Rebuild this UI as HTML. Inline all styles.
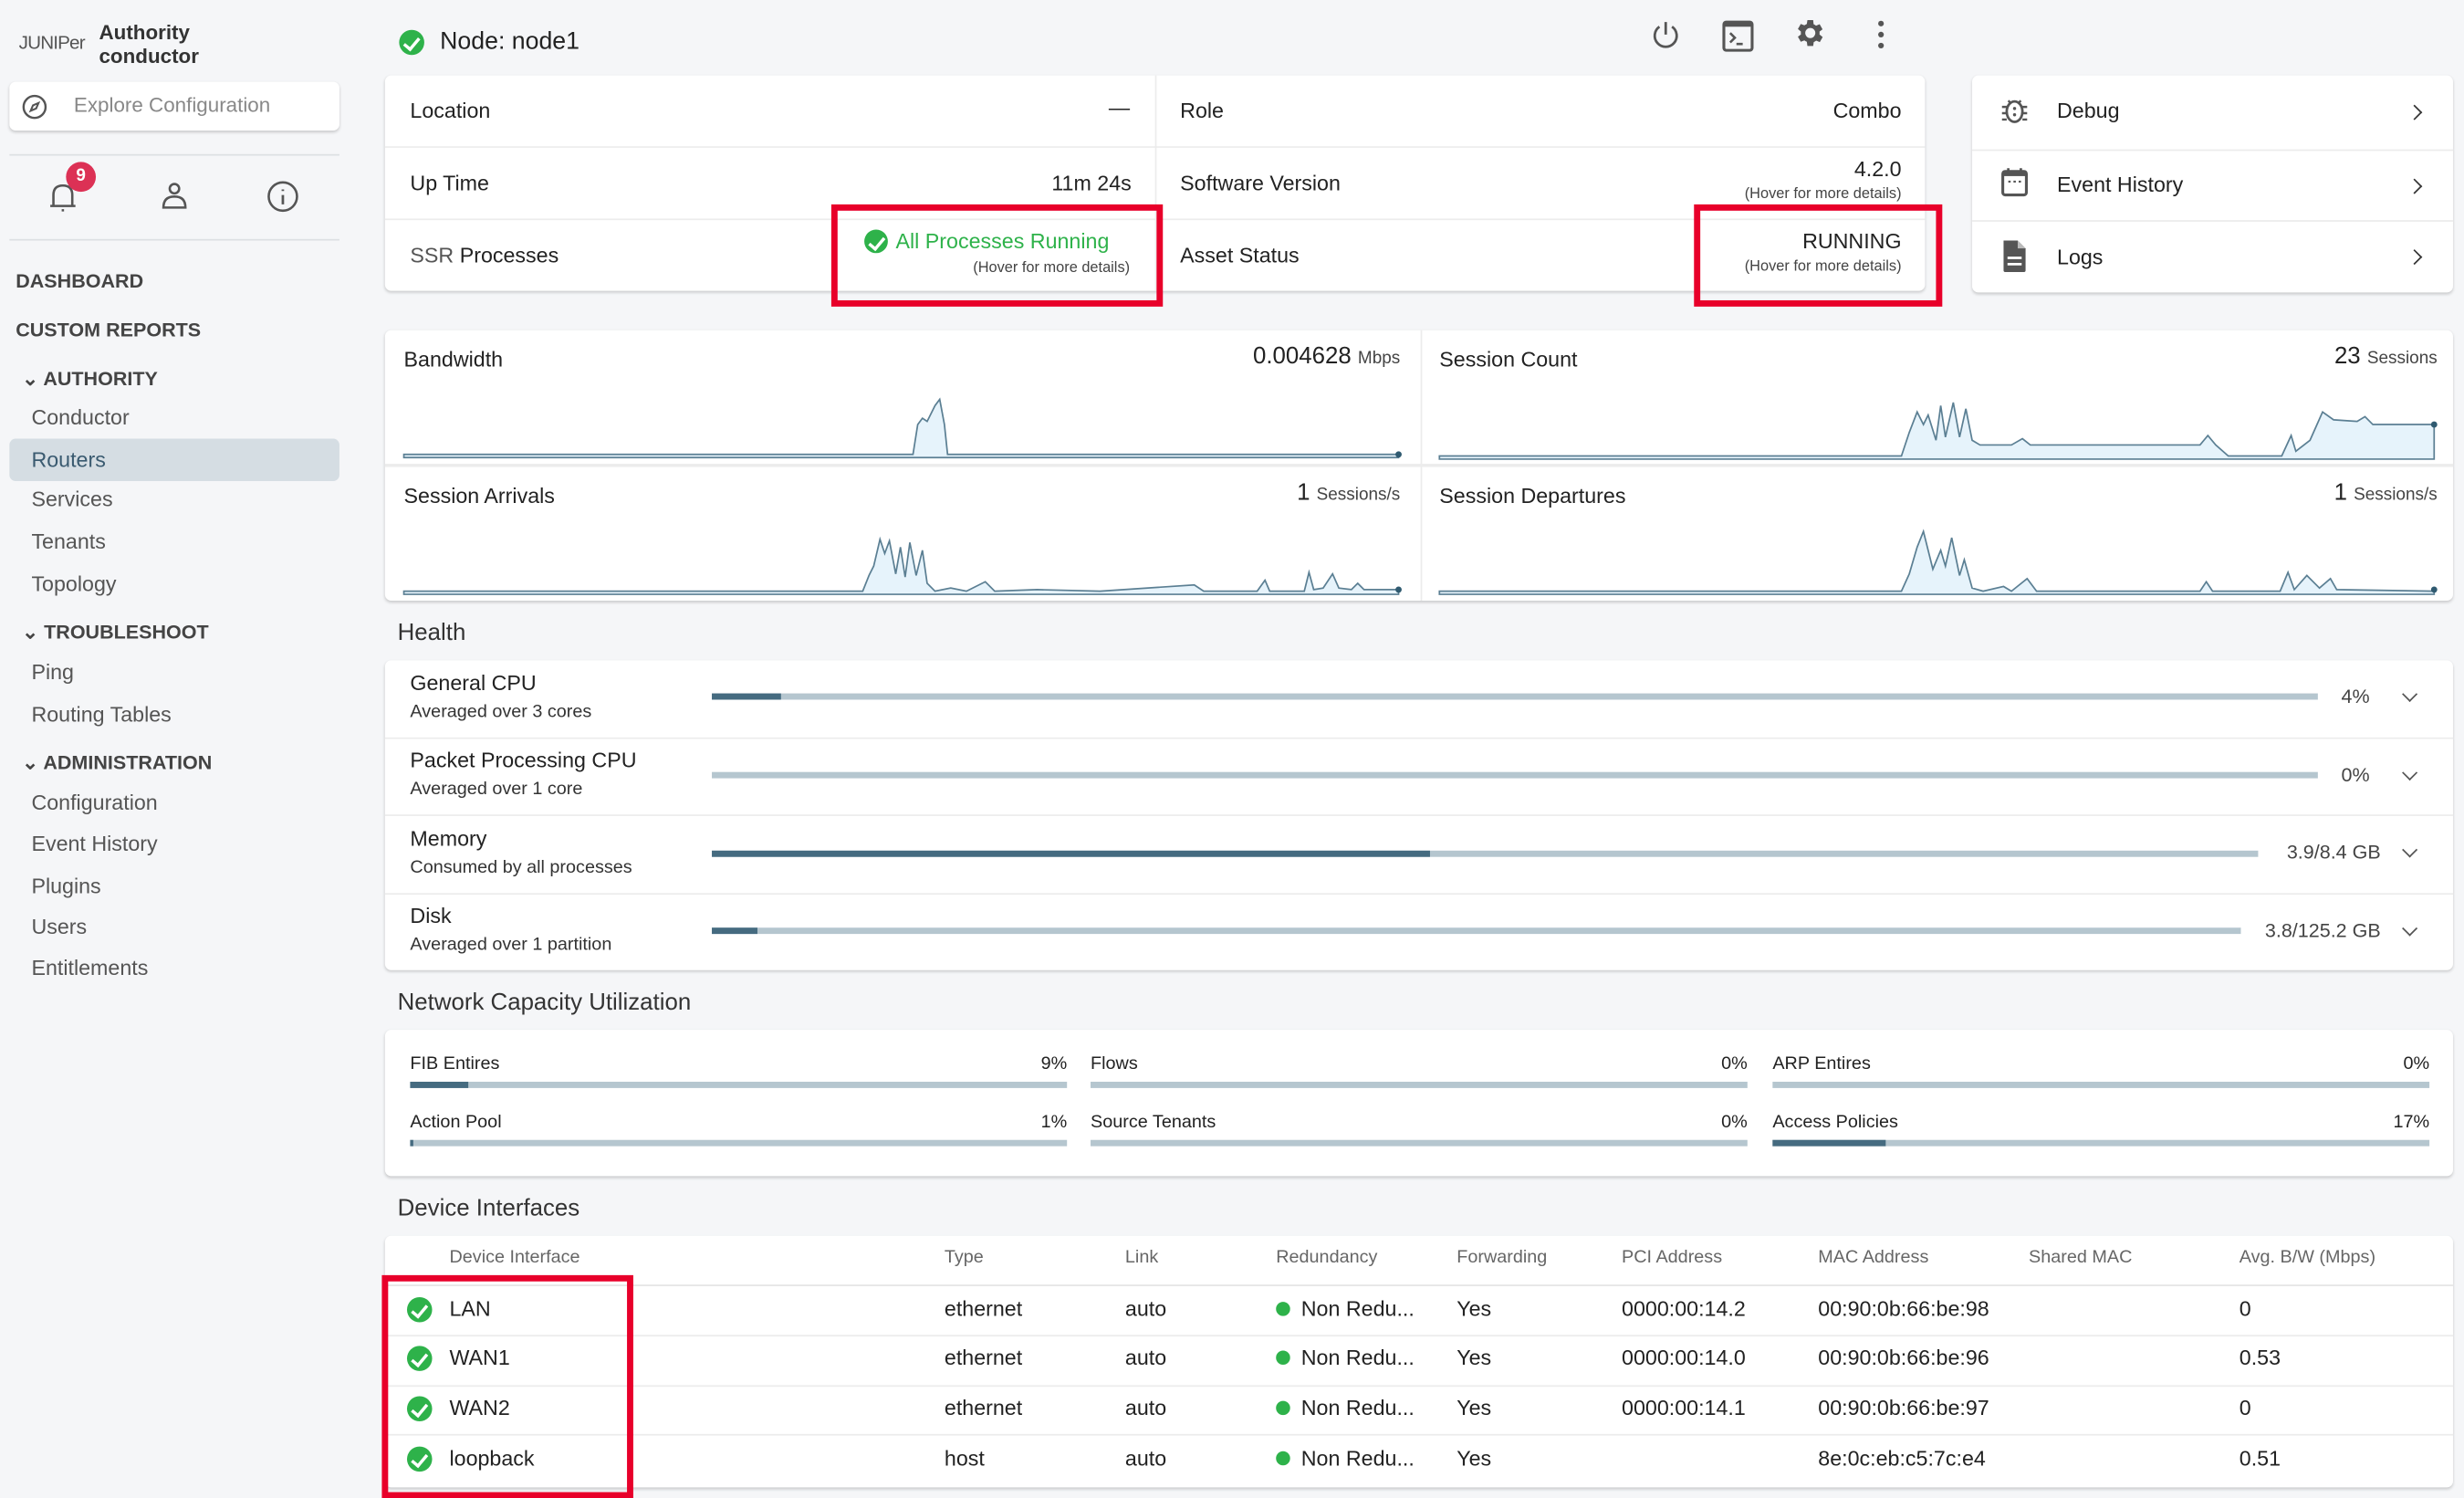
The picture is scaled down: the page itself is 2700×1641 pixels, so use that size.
<!DOCTYPE html>
<html><head><meta charset="utf-8"><style>
html,body{margin:0;padding:0;background:#f5f6f8;overflow:hidden}
#w{position:absolute;left:0;top:0;width:1568px;height:951px;transform:scale(1.72194,1.7224);transform-origin:0 0;font-family:"Liberation Sans",sans-serif;color:#222}
.a{position:absolute;white-space:nowrap;line-height:1}
.card{position:absolute;background:#fff;border-radius:4px;box-shadow:0 1px 2px rgba(0,0,0,.18)}
.hl{position:absolute;height:1px;background:#ececec}
.vl{position:absolute;width:1px;background:#ececec}
.nav{font-size:13.5px;color:#555}
.sec{font-size:12.5px;font-weight:bold;color:#444}
.lbl{font-size:13.5px;color:#222}
.bar{position:absolute;height:4px;background:#b5c6cf}
.bar i{position:absolute;left:0;top:0;height:100%;background:#456b80}
.red{position:absolute;border:4px solid #e8002a;box-sizing:border-box}
.th{font-size:11.5px;color:#666}
.td{font-size:13.5px;color:#222}
.chk{position:absolute;width:16px;height:16px;border-radius:50%;background:#2eb24a}
.chk:after{content:"";position:absolute;left:5px;top:2.5px;width:4px;height:8px;border:solid #fff;border-width:0 2px 2px 0;transform:rotate(40deg)}
.dot{position:absolute;width:9px;height:9px;border-radius:50%;background:#2eb24a}
.chev{position:absolute;width:6px;height:6px;border:solid #555;border-width:0 1.5px 1.5px 0;transform:rotate(45deg)}
.rchev{position:absolute;width:6px;height:6px;border:solid #333;border-width:1.5px 1.5px 0 0;transform:rotate(45deg)}
</style></head><body><div id="w">

<!-- Sidebar -->
<div class="a" style="left:12px;top:21px;font-size:12px;color:#555;letter-spacing:-0.5px">JUNIPer</div>
<div class="a" style="left:63px;top:14px;font-size:13px;font-weight:bold;color:#333">Authority</div>
<div class="a" style="left:63px;top:29px;font-size:13px;font-weight:bold;color:#333">conductor</div>
<div class="card" style="left:6px;top:52px;width:210px;height:31px"></div>
<svg style="position:absolute;left:13px;top:59px" width="18" height="18" viewBox="0 0 18 18"><circle cx="9" cy="9" r="7" fill="none" stroke="#555" stroke-width="1.4"/><path d="M11.5 6.5 L8 8 L6.5 11.5 L10 10 Z" fill="none" stroke="#555" stroke-width="1.2"/></svg>
<div class="a" style="left:47px;top:60px;font-size:13px;color:#888">Explore Configuration</div>
<div class="hl" style="left:6px;top:98px;width:210px;background:#dde0e3"></div>
<div class="hl" style="left:6px;top:152px;width:210px;background:#dde0e3"></div>
<svg style="position:absolute;left:29px;top:114px" width="22" height="22" viewBox="0 0 22 22"><path d="M5 17 L5 10 Q5 4 11 4 Q17 4 17 10 L17 17 Z M3 17 H19 M11 19 v1.5" fill="none" stroke="#555" stroke-width="1.5"/></svg>
<div class="a" style="left:42px;top:103px;width:19px;height:19px;border-radius:50%;background:#dc3155;color:#fff;font-size:11px;font-weight:bold;text-align:center;line-height:19px">9</div>
<svg style="position:absolute;left:100px;top:114px" width="22" height="22" viewBox="0 0 22 22"><circle cx="11" cy="6" r="3" fill="none" stroke="#555" stroke-width="1.5"/><path d="M4 18 Q4 11 11 11 Q18 11 18 18 Z" fill="none" stroke="#555" stroke-width="1.5"/></svg>
<svg style="position:absolute;left:169px;top:114px" width="22" height="22" viewBox="0 0 22 22"><circle cx="11" cy="11" r="9" fill="none" stroke="#555" stroke-width="1.5"/><path d="M11 10 v6 M11 6.5 v1" stroke="#555" stroke-width="1.6"/></svg>

<div class="a sec" style="left:10px;top:173px">DASHBOARD</div>
<div class="a sec" style="left:10px;top:204px">CUSTOM REPORTS</div>
<div class="a sec" style="left:14px;top:235px">⌄ AUTHORITY</div>
<div class="a nav" style="left:20px;top:259px">Conductor</div>
<div style="position:absolute;left:6px;top:279px;width:210px;height:27px;background:#d5dde3;border-radius:4px"></div>
<div class="a nav" style="left:20px;top:286px;color:#3a5a70">Routers</div>
<div class="a nav" style="left:20px;top:311px">Services</div>
<div class="a nav" style="left:20px;top:338px">Tenants</div>
<div class="a nav" style="left:20px;top:365px">Topology</div>
<div class="a sec" style="left:14px;top:396px">⌄ TROUBLESHOOT</div>
<div class="a nav" style="left:20px;top:421px">Ping</div>
<div class="a nav" style="left:20px;top:448px">Routing Tables</div>
<div class="a sec" style="left:14px;top:479px">⌄ ADMINISTRATION</div>
<div class="a nav" style="left:20px;top:504px">Configuration</div>
<div class="a nav" style="left:20px;top:530px">Event History</div>
<div class="a nav" style="left:20px;top:557px">Plugins</div>
<div class="a nav" style="left:20px;top:583px">Users</div>
<div class="a nav" style="left:20px;top:609px">Entitlements</div>

<!-- Header -->
<div class="chk" style="left:254px;top:19px"></div>
<div class="a" style="left:280px;top:19px;font-size:15.5px;color:#222">Node: node1</div>
<svg style="position:absolute;left:1049px;top:11px" width="22" height="22" viewBox="0 0 22 22"><path d="M7 6 A7 7 0 1 0 15 6 M11 3 V11" fill="none" stroke="#555" stroke-width="1.6"/></svg>
<svg style="position:absolute;left:1095px;top:12px" width="22" height="22" viewBox="0 0 22 22"><rect x="2" y="2" width="18" height="18" rx="1.5" fill="none" stroke="#555" stroke-width="1.8"/><rect x="2" y="2" width="18" height="3" fill="#555"/><path d="M6 9 L9 12 L6 15 M10 16 H14" fill="none" stroke="#555" stroke-width="1.5"/></svg>
<svg style="position:absolute;left:1141px;top:10px" width="22" height="22" viewBox="0 0 24 24"><path fill="#555" d="M19.4 13a7.5 7.5 0 0 0 0-2l2.1-1.6-2-3.5-2.5 1a7 7 0 0 0-1.7-1L15 3h-4l-.4 2.7a7 7 0 0 0-1.7 1l-2.5-1-2 3.5L6.5 11a7.5 7.5 0 0 0 0 2l-2.1 1.6 2 3.5 2.5-1a7 7 0 0 0 1.7 1L11 21h4l.4-2.7a7 7 0 0 0 1.7-1l2.5 1 2-3.5zM13 15.5a3.5 3.5 0 1 1 0-7 3.5 3.5 0 0 1 0 7z" transform="translate(-1 0)"/></svg>
<svg style="position:absolute;left:1192px;top:12px" width="10" height="20" viewBox="0 0 10 20"><circle cx="5" cy="3" r="1.8" fill="#555"/><circle cx="5" cy="10" r="1.8" fill="#555"/><circle cx="5" cy="17" r="1.8" fill="#555"/></svg>

<!-- Info card -->
<div class="card" style="left:245px;top:48px;width:980px;height:137px"></div>
<div class="vl" style="left:735px;top:48px;height:137px"></div>
<div class="hl" style="left:245px;top:93px;width:980px"></div>
<div class="hl" style="left:245px;top:139px;width:980px"></div>
<div class="a lbl" style="left:261px;top:64px">Location</div>
<div class="a lbl" style="right:849px;top:62px">—</div>
<div class="a lbl" style="left:261px;top:110px">Up Time</div>
<div class="a lbl" style="right:848px;top:110px">11m 24s</div>
<div class="a lbl" style="left:261px;top:156px"><span style="color:#555">SSR</span> Processes</div>
<div class="chk" style="left:550px;top:146px;width:15px;height:15px"></div>
<div class="a" style="left:570px;top:147px;font-size:13.5px;color:#2eb24a">All Processes Running</div>
<div class="a" style="right:849px;top:166px;font-size:9.5px;color:#444">(Hover for more details)</div>
<div class="a lbl" style="left:751px;top:64px">Role</div>
<div class="a lbl" style="right:358px;top:64px">Combo</div>
<div class="a lbl" style="left:751px;top:110px">Software Version</div>
<div class="a lbl" style="right:358px;top:101px">4.2.0</div>
<div class="a" style="right:358px;top:119px;font-size:9.5px;color:#444">(Hover for more details)</div>
<div class="a lbl" style="left:751px;top:156px">Asset Status</div>
<div class="a lbl" style="right:358px;top:147px">RUNNING</div>
<div class="a" style="right:358px;top:165px;font-size:9.5px;color:#444">(Hover for more details)</div>
<div class="red" style="left:529px;top:130px;width:211px;height:65px"></div>
<div class="red" style="left:1078px;top:130px;width:158px;height:65px"></div>

<!-- Right card -->
<div class="card" style="left:1255px;top:48px;width:306px;height:138px"></div>
<div class="hl" style="left:1255px;top:95px;width:306px"></div>
<div class="hl" style="left:1255px;top:140px;width:306px"></div>
<svg style="position:absolute;left:1272px;top:60px" width="20" height="20" viewBox="0 0 20 20"><ellipse cx="10" cy="11" rx="5" ry="6.5" fill="none" stroke="#555" stroke-width="1.6"/><path d="M6 4 L8 6 M14 4 L12 6 M2 8 H5 M15 8 H18 M2 12 H5 M15 12 H18 M2 16 H5 M15 16 H18" stroke="#555" stroke-width="1.4"/><circle cx="10" cy="9" r="1" fill="#555"/><circle cx="10" cy="13" r="1" fill="#555"/></svg>
<div class="a" style="left:1309px;top:64px;font-size:13.5px">Debug</div>
<div class="rchev" style="left:1533px;top:68px"></div>
<svg style="position:absolute;left:1272px;top:106px" width="20" height="20" viewBox="0 0 20 20"><rect x="2.5" y="3" width="15" height="15" rx="1.5" fill="none" stroke="#555" stroke-width="1.8"/><rect x="2.5" y="3" width="15" height="3" fill="#555"/><path d="M6 1 v3 M14 1 v3" stroke="#555" stroke-width="1.6"/><path d="M6 9.5 h1.5 M9.3 9.5 h1.5 M12.6 9.5 h1.5" stroke="#555" stroke-width="1.3"/></svg>
<div class="a" style="left:1309px;top:111px;font-size:13.5px">Event History</div>
<div class="rchev" style="left:1533px;top:115px"></div>
<svg style="position:absolute;left:1272px;top:152px" width="20" height="22" viewBox="0 0 20 22"><path d="M3 1 H12 L17 6 V20 Q17 21 16 21 H4 Q3 21 3 20 Z" fill="#555"/><path d="M12 1 V6 H17" fill="#bbb"/><path d="M5.5 12 H14.5 M5.5 16 H14.5" stroke="#fff" stroke-width="1.6"/></svg>
<div class="a" style="left:1309px;top:157px;font-size:13.5px">Logs</div>
<div class="rchev" style="left:1533px;top:160px"></div>

<!-- Charts -->
<div class="card" style="left:245px;top:210px;width:1316px;height:172px"></div>
<div class="vl" style="left:904px;top:210px;height:172px"></div>
<div class="hl" style="left:245px;top:295px;width:1316px;height:2px"></div>
<div class="a lbl" style="left:257px;top:222px">Bandwidth</div>
<div class="a" style="right:677px;top:219px;font-size:15px">0.004628 <span style="font-size:11px;color:#444">Mbps</span></div>
<div class="a lbl" style="left:916px;top:222px">Session Count</div>
<div class="a" style="right:17px;top:219px;font-size:15px">23 <span style="font-size:11px;color:#444">Sessions</span></div>
<div class="a lbl" style="left:257px;top:309px">Session Arrivals</div>
<div class="a" style="right:677px;top:306px;font-size:15px">1 <span style="font-size:11px;color:#444">Sessions/s</span></div>
<div class="a lbl" style="left:916px;top:309px">Session Departures</div>
<div class="a" style="right:17px;top:306px;font-size:15px">1 <span style="font-size:11px;color:#444">Sessions/s</span></div>
<svg style="position:absolute;left:0;top:0" width="1568" height="951">
<g fill="#e6f3fb" stroke="#5b7f93" stroke-width="1">
<path d="M257 289 L581 289 L584 270 L587 266 L590 268 L595 258 L598 254 L601 270 L603 289 L890 289 L890 291 L257 291Z"/>
<path d="M257 376 L549 376 L553 366 L556 360 L560 343 L563 352 L566 344 L570 365 L573 348 L576 367 L579 345 L583 366 L587 350 L590 371 L595 376 L605 374 L615 376 L627 370 L633 376 L660 375 L700 376 L760 372 L766 376 L800 376 L805 369 L808 376 L830 376 L833 364 L836 375 L842 374 L848 365 L852 374 L860 375 L864 371 L868 375 L890 375 L890 378 L257 378Z"/>
<path d="M916 290 L1210 290 L1215 275 L1220 262 L1224 270 L1227 264 L1232 280 L1235 258 L1238 278 L1243 256 L1247 278 L1251 260 L1255 280 L1260 283 L1280 283 L1287 279 L1292 283 L1400 283 L1405 277 L1410 283 L1418 290 L1452 290 L1458 277 L1461 287 L1470 280 L1478 262 L1485 267 L1500 268 L1505 265 L1510 270 L1549 270 L1549 292 L916 292Z"/>
<path d="M916 376 L1210 376 L1215 365 L1220 348 L1224 338 L1230 362 L1235 350 L1238 360 L1242 342 L1247 366 L1250 356 L1255 374 L1262 376 L1275 373 L1280 376 L1290 368 L1296 376 L1400 376 L1404 370 L1408 376 L1451 376 L1456 364 L1460 375 L1468 366 L1476 374 L1483 368 L1487 375 L1549 376 L1549 378 L916 378Z"/>
</g>
<g fill="#2f5a70"><circle cx="890" cy="289" r="2"/><circle cx="890" cy="375" r="2"/><circle cx="1549" cy="270" r="2"/><circle cx="1549" cy="375" r="2"/></g>
</svg>

<!-- Health -->
<div class="a" style="left:253px;top:395px;font-size:15px;color:#333">Health</div>
<div class="card" style="left:245px;top:420px;width:1316px;height:197px"></div>
<div class="hl" style="left:245px;top:469px;width:1316px"></div>
<div class="hl" style="left:245px;top:518px;width:1316px"></div>
<div class="hl" style="left:245px;top:568px;width:1316px"></div>
<div class="a" style="left:261px;top:428px;font-size:13.5px">General CPU</div>
<div class="a" style="left:261px;top:448px;font-size:11.5px;color:#333">Averaged over 3 cores</div>
<div class="bar" style="left:453px;top:441px;width:1022px"><i style="width:44px"></i></div>
<div class="a" style="right:60px;top:437px;font-size:12.5px;color:#444">4%</div>
<div class="chev" style="left:1530px;top:438px"></div>
<div class="a" style="left:261px;top:477px;font-size:13.5px">Packet Processing CPU</div>
<div class="a" style="left:261px;top:497px;font-size:11.5px;color:#333">Averaged over 1 core</div>
<div class="bar" style="left:453px;top:491px;width:1022px"></div>
<div class="a" style="right:60px;top:487px;font-size:12.5px;color:#444">0%</div>
<div class="chev" style="left:1530px;top:488px"></div>
<div class="a" style="left:261px;top:527px;font-size:13.5px">Memory</div>
<div class="a" style="left:261px;top:547px;font-size:11.5px;color:#333">Consumed by all processes</div>
<div class="bar" style="left:453px;top:541px;width:984px"><i style="width:457px"></i></div>
<div class="a" style="right:53px;top:536px;font-size:12.5px;color:#444">3.9/8.4 GB</div>
<div class="chev" style="left:1530px;top:537px"></div>
<div class="a" style="left:261px;top:576px;font-size:13.5px">Disk</div>
<div class="a" style="left:261px;top:596px;font-size:11.5px;color:#333">Averaged over 1 partition</div>
<div class="bar" style="left:453px;top:590px;width:973px"><i style="width:29px"></i></div>
<div class="a" style="right:53px;top:586px;font-size:12.5px;color:#444">3.8/125.2 GB</div>
<div class="chev" style="left:1530px;top:587px"></div>

<!-- Network capacity -->
<div class="a" style="left:253px;top:630px;font-size:15px;color:#333">Network Capacity Utilization</div>
<div class="card" style="left:245px;top:655px;width:1316px;height:93px"></div>
<div class="a" style="left:261px;top:672px;font-size:11.5px">FIB Entires</div><div class="a" style="right:889px;top:672px;font-size:11.5px">9%</div>
<div class="bar" style="left:261px;top:688px;width:418px"><i style="width:37px"></i></div>
<div class="a" style="left:694px;top:672px;font-size:11.5px">Flows</div><div class="a" style="right:456px;top:672px;font-size:11.5px">0%</div>
<div class="bar" style="left:694px;top:688px;width:418px"></div>
<div class="a" style="left:1128px;top:672px;font-size:11.5px">ARP Entires</div><div class="a" style="right:22px;top:672px;font-size:11.5px">0%</div>
<div class="bar" style="left:1128px;top:688px;width:418px"></div>
<div class="a" style="left:261px;top:709px;font-size:11.5px">Action Pool</div><div class="a" style="right:889px;top:709px;font-size:11.5px">1%</div>
<div class="bar" style="left:261px;top:725px;width:418px"><i style="width:2px"></i></div>
<div class="a" style="left:694px;top:709px;font-size:11.5px">Source Tenants</div><div class="a" style="right:456px;top:709px;font-size:11.5px">0%</div>
<div class="bar" style="left:694px;top:725px;width:418px"></div>
<div class="a" style="left:1128px;top:709px;font-size:11.5px">Access Policies</div><div class="a" style="right:22px;top:709px;font-size:11.5px">17%</div>
<div class="bar" style="left:1128px;top:725px;width:418px"><i style="width:72px"></i></div>

<!-- Device interfaces -->
<div class="a" style="left:253px;top:761px;font-size:15px;color:#333">Device Interfaces</div>
<div class="card" style="left:245px;top:786px;width:1316px;height:160px"></div>
<div class="hl" style="left:245px;top:817px;width:1316px;background:#e4e4e4"></div>
<div class="hl" style="left:245px;top:849px;width:1316px"></div>
<div class="hl" style="left:245px;top:881px;width:1316px"></div>
<div class="hl" style="left:245px;top:912px;width:1316px"></div>
<div class="a th" style="left:286px;top:795px">Device Interface</div>
<div class="a th" style="left:601px;top:795px">Type</div>
<div class="a th" style="left:716px;top:795px">Link</div>
<div class="a th" style="left:812px;top:795px">Redundancy</div>
<div class="a th" style="left:927px;top:795px">Forwarding</div>
<div class="a th" style="left:1032px;top:795px">PCI Address</div>
<div class="a th" style="left:1157px;top:795px">MAC Address</div>
<div class="a th" style="left:1291px;top:795px">Shared MAC</div>
<div class="a th" style="left:1425px;top:795px">Avg. B/W (Mbps)</div>

<div class="chk" style="left:259px;top:825px"></div><div class="a td" style="left:286px;top:826px">LAN</div><div class="a td" style="left:601px;top:826px">ethernet</div><div class="a td" style="left:716px;top:826px">auto</div><div class="dot" style="left:812px;top:828px"></div><div class="a td" style="left:828px;top:826px">Non Redu...</div><div class="a td" style="left:927px;top:826px">Yes</div><div class="a td" style="left:1032px;top:826px">0000:00:14.2</div><div class="a td" style="left:1157px;top:826px">00:90:0b:66:be:98</div><div class="a td" style="left:1425px;top:826px">0</div>
<div class="chk" style="left:259px;top:856px"></div><div class="a td" style="left:286px;top:857px">WAN1</div><div class="a td" style="left:601px;top:857px">ethernet</div><div class="a td" style="left:716px;top:857px">auto</div><div class="dot" style="left:812px;top:859px"></div><div class="a td" style="left:828px;top:857px">Non Redu...</div><div class="a td" style="left:927px;top:857px">Yes</div><div class="a td" style="left:1032px;top:857px">0000:00:14.0</div><div class="a td" style="left:1157px;top:857px">00:90:0b:66:be:96</div><div class="a td" style="left:1425px;top:857px">0.53</div>
<div class="chk" style="left:259px;top:888px"></div><div class="a td" style="left:286px;top:889px">WAN2</div><div class="a td" style="left:601px;top:889px">ethernet</div><div class="a td" style="left:716px;top:889px">auto</div><div class="dot" style="left:812px;top:891px"></div><div class="a td" style="left:828px;top:889px">Non Redu...</div><div class="a td" style="left:927px;top:889px">Yes</div><div class="a td" style="left:1032px;top:889px">0000:00:14.1</div><div class="a td" style="left:1157px;top:889px">00:90:0b:66:be:97</div><div class="a td" style="left:1425px;top:889px">0</div>
<div class="chk" style="left:259px;top:920px"></div><div class="a td" style="left:286px;top:921px">loopback</div><div class="a td" style="left:601px;top:921px">host</div><div class="a td" style="left:716px;top:921px">auto</div><div class="dot" style="left:812px;top:923px"></div><div class="a td" style="left:828px;top:921px">Non Redu...</div><div class="a td" style="left:927px;top:921px">Yes</div><div class="a td" style="left:1157px;top:921px">8e:0c:eb:c5:7c:e4</div><div class="a td" style="left:1425px;top:921px">0.51</div>
<div class="red" style="left:243px;top:811px;width:160px;height:142px"></div>

</div></body></html>
